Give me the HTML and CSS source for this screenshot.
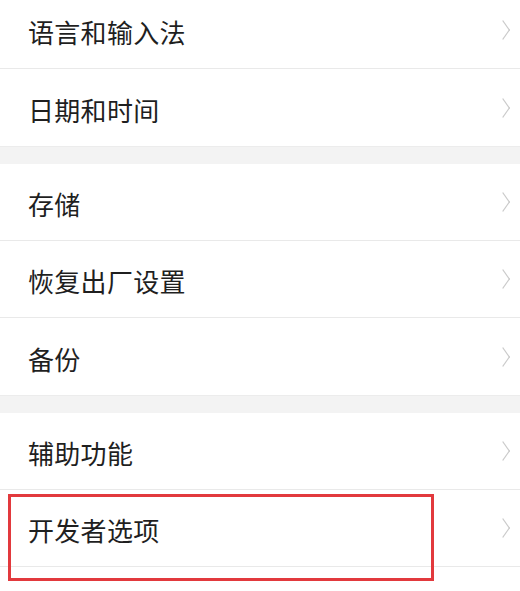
FILE: index.html
```html
<!DOCTYPE html>
<html>
<head>
  <meta charset="UTF-8">
  <link rel="stylesheet" href="styles.css">
</head>
<body>
  <div class="settings">
    <div class="item"><span class="label">语言和输入法</span><span class="chevron"></span></div>
    <div class="item last"><span class="label">日期和时间</span><span class="chevron"></span></div>
    <div class="gap"></div>
    <div class="item"><span class="label">存储</span><span class="chevron"></span></div>
    <div class="item"><span class="label">恢复出厂设置</span><span class="chevron"></span></div>
    <div class="item last"><span class="label">备份</span><span class="chevron"></span></div>
    <div class="gap"></div>
    <div class="item"><span class="label">辅助功能</span><span class="chevron"></span></div>
    <div class="item"><span class="label">开发者选项</span><span class="chevron"></span></div>
    <div class="item tail"></div>
    <div class="highlight"></div>
  </div>
</body>
</html>
```

FILE: styles.css
```css
* {
  margin: 0;
  padding: 0;
  box-sizing: border-box;
}

body {
  width: 520px;
  height: 591px;
  overflow: hidden;
  background: #ffffff;
  font-family: "Noto Sans CJK SC", "Noto Sans", sans-serif;
  color: #1f1f1f;
}

.settings {
  position: relative;
  margin-top: -8px;
}

.item {
  display: flex;
  align-items: center;
  justify-content: space-between;
  height: 77px;
  padding: 0 8px 0 28px;
  border-bottom: 1px solid #e9e9e9;
}

.item.last {
  border-bottom: none;
}

.item.tail {
  height: 20px;
  border-bottom: none;
}

.label {
  font-size: 26px;
  line-height: 1;
  letter-spacing: 0.3px;
  padding-top: 4px;
}

/* thin grey arrow on the right */
.chevron {
  width: 10px;
  height: 10px;
  margin-right: 4px;
  border-top: 1.2px solid #cacaca;
  border-right: 1.2px solid #cacaca;
  transform: scaleY(1.4) rotate(45deg);
}

.gap {
  height: 18px;
  background: #f3f3f3;
  border-top: 1px solid #ececec;
}

/* red annotation frame */
.highlight {
  position: absolute;
  left: 8px;
  top: 502px;
  width: 426px;
  height: 87px;
  border: 3px solid #e2393d;
}
```
